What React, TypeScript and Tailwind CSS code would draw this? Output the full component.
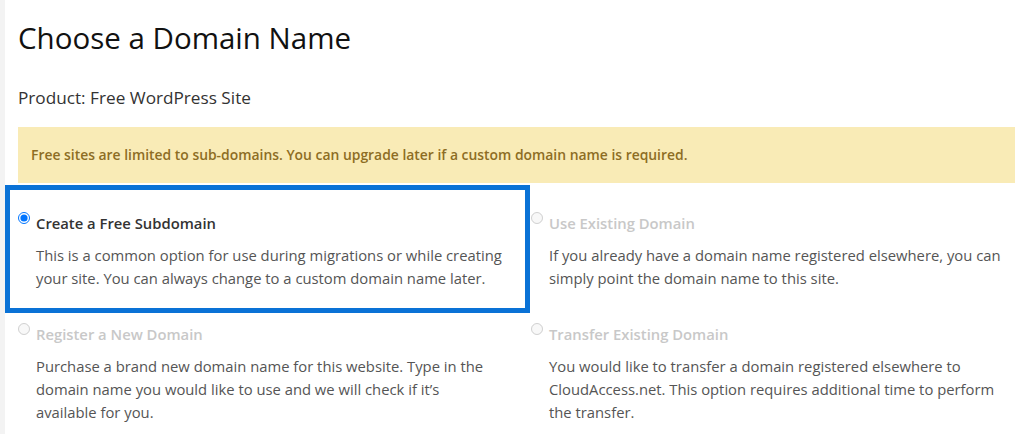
import React from "react";

type Option = {
  id: string;
  label: string;
  description: React.ReactNode;
  checked?: boolean;
  disabled?: boolean;
  descWidth: string;
};

const options: Option[] = [
  {
    id: "free",
    label: "Create a Free Subdomain",
    description:
      "This is a common option for use during migrations or while creating your site. You can always change to a custom domain name later.",
    checked: true,
    descWidth: "w-[489px]",
  },
  {
    id: "existing",
    label: "Use Existing Domain",
    description:
      "If you already have a domain name registered elsewhere, you can simply point the domain name to this site.",
    disabled: true,
    descWidth: "w-[478px]",
  },
  {
    id: "register",
    label: "Register a New Domain",
    description: (
      <>
        {"Purchase a brand new domain name for this website. Type in the domain name you would like to use and we will check if it\u2019s"}
        <br />
        {"available for you."}
      </>
    ),
    disabled: true,
    descWidth: "w-[489px]",
  },
  {
    id: "transfer",
    label: "Transfer Existing Domain",
    description:
      "You would like to transfer a domain registered elsewhere to CloudAccess.net. This option requires additional time to perform the transfer.",
    disabled: true,
    descWidth: "w-[478px]",
  },
];

function DomainOption({ option }: { option: Option }) {
  return (
    <div className="pb-[32px]">
      <label className="flex items-start gap-[6px]">
        <input
          type="radio"
          name="domain-type"
          defaultChecked={option.checked}
          disabled={option.disabled}
          className="m-0 mt-[1px] h-[12px] w-[12px] shrink-0 accent-[#0075ff]"
        />
        <span
          className={
            option.disabled
              ? "text-[14.8px] font-semibold leading-[24px] text-[#c8c8c8]"
              : "text-[14.8px] font-semibold leading-[24px] text-[#333333]"
          }
        >
          {option.label}
        </span>
      </label>
      <p
        className={`mt-[9px] pl-[18px] text-[14.8px] leading-[23px] text-[#555555] ${option.descWidth}`}
      >
        {option.description}
      </p>
    </div>
  );
}

export default function App() {
  return (
    <div className="flex h-[434px] overflow-hidden bg-white font-['Open_Sans',sans-serif]">
      <div className="w-[5px] shrink-0 bg-[#f3f3f3]" />
      <div className="flex-1 pl-[13px] pr-[9px]">
        <h1 className="pt-[20px] text-[29.5px] leading-[36px] text-[#111111]">
          Choose a Domain Name
        </h1>
        <h2 className="mt-[30px] text-[17.2px] leading-[24px] text-[#333333]">
          Product: Free WordPress Site
        </h2>
        <div className="mt-[17px] flex h-[56px] items-center bg-[#f9ebb6] pl-[13px] text-[13.9px] font-semibold text-[#8d6d24]">
          Free sites are limited to sub-domains. You can upgrade later if a custom
          domain name is required.
        </div>
        <div className="relative grid grid-cols-[513px_1fr] pt-[28px]">
          {options.map((option) => (
            <DomainOption key={option.id} option={option} />
          ))}
          <div className="pointer-events-none absolute left-[-13px] top-[2px] h-[128px] w-[525px] border-[5px] border-[#0a72d6]" />
        </div>
      </div>
    </div>
  );
}
